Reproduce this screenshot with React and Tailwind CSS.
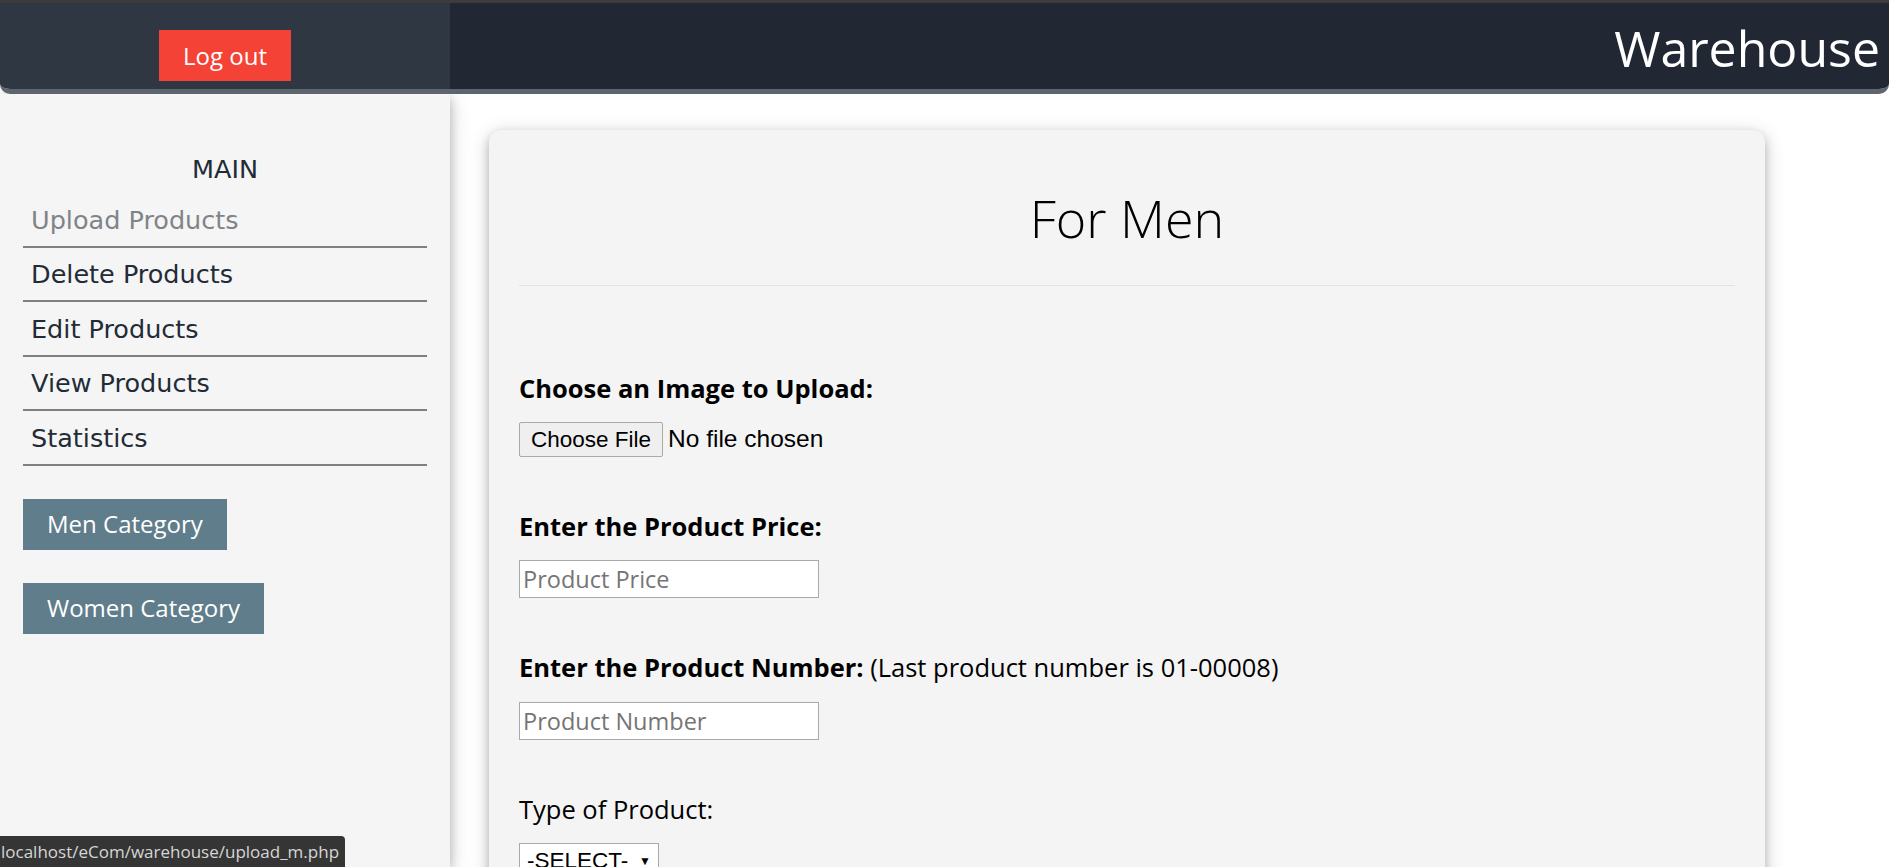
export default function App() {
  const links = ["Upload Products", "Delete Products", "Edit Products", "View Products", "Statistics"];

  return (
    <div className="relative h-[867px] w-full overflow-hidden bg-white font-['Open_Sans',sans-serif]">
      <div className="h-[3px] bg-[#3c3c3c]" />

      <header className="relative z-20 flex h-[91px] overflow-hidden rounded-b-[10px] border-b-[5px] border-[#5d656f]">
        <div className="flex w-[450px] justify-center bg-[#2f3742] pt-[27px]">
          <button className="h-[51px] bg-[#f44336] px-[24px] text-[24px] leading-[51px] text-white">Log out</button>
        </div>
        <div className="flex flex-1 justify-end bg-[#222833] pr-[9px] pt-[2px] text-[50px] leading-[86px] text-white">
          Warehouse
        </div>
      </header>

      <div className="flex h-[773px]">
        <aside className="relative z-10 w-[450px] shrink-0 bg-[#f5f5f5] px-[23px] pt-[56px] shadow-[0_4px_10px_0_rgba(0,0,0,0.2),0_4px_20px_0_rgba(0,0,0,0.19)] font-['DejaVu_Sans',sans-serif]">
          <div className="mb-[5px] text-center text-[25.5px] leading-[38px] text-[#222b36]">MAIN</div>
          {links.map((l, i) => (
            <div
              key={l}
              className={
                "flex h-[54.5px] items-center border-b-2 border-[#7f7f7f] pl-[8px] pt-[1px] text-[25.5px] " +
                (i === 0 ? "text-[#808489]" : "text-[#222b36]")
              }
            >
              {l}
            </div>
          ))}
          <div className="mt-[33px] flex flex-col items-start gap-[33px] font-['Open_Sans',sans-serif]">
            <button className="h-[51px] bg-[#607d8b] px-[24px] text-[24px] text-white">Men Category</button>
            <button className="h-[51px] bg-[#607d8b] px-[24px] text-[24px] text-white">Women Category</button>
          </div>
        </aside>

        <main className="flex-1 bg-white pl-[39px] pt-[36px]">
          <div className="h-[800px] w-[1276px] rounded-[12px] bg-[#f4f4f4] px-[30px] pt-[57px] text-black shadow-[0_4px_10px_0_rgba(0,0,0,0.2),0_4px_20px_0_rgba(0,0,0,0.19)]">
            <h1 className="text-center text-[52px] font-light leading-[62px]">For Men</h1>
            <div className="mt-[36px] h-px bg-[#e3e3e3]" />

            <div className="mt-[84px]">
              <div className="text-[25.5px] font-bold leading-[36px]">Choose an Image to Upload:</div>
              <div className="mt-[15px] flex items-center font-['Liberation_Sans',sans-serif] text-[22.5px]">
                <span className="flex h-[35px] w-[144px] items-center justify-center rounded-[2px] border border-[#a9a9a9] bg-[#efefef]">Choose File</span>
                <span className="ml-[5px] text-[24.5px]">No file chosen</span>
              </div>
            </div>

            <div className="mt-[50px]">
              <div className="text-[25.5px] font-bold leading-[36px]">Enter the Product Price:</div>
              <input
                className="mt-[16px] block h-[38px] w-[300px] border border-[#a9a9a9] bg-white px-[3px] text-[23.5px] outline-none placeholder:text-[#757575]"
                placeholder="Product Price"
              />
            </div>

            <div className="mt-[51px]">
              <div className="text-[25.5px] leading-[36px]">
                <span className="font-bold">Enter the Product Number:</span> (Last product number is 01-00008)
              </div>
              <input
                className="mt-[17px] block h-[38px] w-[300px] border border-[#a9a9a9] bg-white px-[3px] text-[23.5px] outline-none placeholder:text-[#757575]"
                placeholder="Product Number"
              />
            </div>

            <div className="mt-[51px]">
              <div className="text-[25.5px] leading-[36px]">Type of Product:</div>
              <div className="mt-[16px] flex h-[36px] w-[140px] items-center justify-between border border-[#a9a9a9] bg-white px-[7px] font-['Liberation_Sans',sans-serif] text-[22.5px]">
                <span>-SELECT-</span>
                <span className="text-[12px]">▼</span>
              </div>
            </div>
          </div>
        </main>
      </div>

      <div className="absolute bottom-0 left-0 z-30 h-[31px] rounded-tr-[4px] bg-[#353535] pl-[1px] pr-[6px] text-[17px] leading-[31px] text-[#d6d6d6]">
        localhost/eCom/warehouse/upload_m.php
      </div>
    </div>
  );
}
